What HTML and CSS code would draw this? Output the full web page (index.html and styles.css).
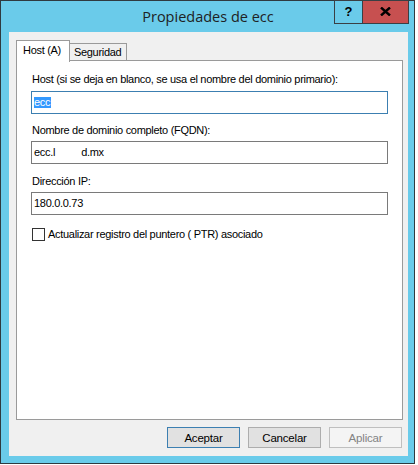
FILE: index.html
```html
<!DOCTYPE html>
<html lang="es">
<head>
<meta charset="utf-8">
<title>Propiedades de ecc</title>
<link rel="stylesheet" href="styles.css">
</head>
<body>
<div class="window">
  <div class="titlebar">
    <div class="title">Propiedades de ecc</div>
    <div class="controls">
      <div class="ctl help">?</div>
      <div class="ctl close">
        <svg width="11" height="9" viewBox="0 0 11 9"><path d="M1 0.5 L10 8.5 M10 0.5 L1 8.5" stroke="#000" stroke-width="2.4" fill="none"/></svg>
      </div>
    </div>
  </div>
  <div class="client">
    <div class="tabs">
      <div class="tab active">Host (A)</div>
      <div class="tab">Seguridad</div>
    </div>
    <div class="panel">
      <div class="label l1">Host (si se deja en blanco, se usa el nombre del dominio primario):</div>
      <div class="input focus i1"><span class="sel">ecc</span></div>
      <div class="label l2">Nombre de dominio completo (FQDN):</div>
      <div class="input i2">ecc.l<span class="redact"></span>d.mx</div>
      <div class="label l3">Dirección IP:</div>
      <div class="input i3">180.0.0.73</div>
      <div class="check">
        <span class="box"></span>
        <span class="checklabel">Actualizar registro del puntero ( PTR) asociado</span>
      </div>
    </div>
    <div class="buttons">
      <div class="btn default">Aceptar</div>
      <div class="btn">Cancelar</div>
      <div class="btn disabled">Aplicar</div>
    </div>
  </div>
</div>
</body>
</html>
```

FILE: styles.css
```css
html, body {
  margin: 0;
  padding: 0;
  background: #ffffff;
}

body {
  font-family: "Liberation Sans", Arial, sans-serif;
  font-size: 11px;
  letter-spacing: -0.3px;
  color: #000;
}

.window {
  width: 415px;
  height: 464px;
  box-sizing: border-box;
  border: 1px solid #2f3a40;
  background: #6acbea;
  display: flex;
  flex-direction: column;
}

.titlebar {
  position: relative;
  height: 31px;
  flex: none;
}

.title {
  text-align: center;
  font-family: "Open Sans", "Noto Sans", sans-serif;
  font-size: 14.5px;
  letter-spacing: 0;
  line-height: 31px;
  color: #1e2224;
  padding-left: 1px;
}

.controls {
  position: absolute;
  top: -1px;
  right: 5px;
  display: flex;
}

.ctl {
  height: 22px;
  box-sizing: content-box;
  border: 1px solid #3a3f44;
  display: flex;
  align-items: center;
  justify-content: center;
  letter-spacing: 0;
}

.help {
  width: 27px;
  border-right: none;
  font-weight: bold;
  font-size: 13px;
  font-family: "Liberation Sans", Arial, sans-serif;
  padding-bottom: 2px;
  height: 20px;
}

.close {
  width: 45px;
  background: #c75050;
}

.close svg {
  display: block;
  margin-top: -1px;
}

.client {
  flex: 1;
  margin: 0 6px 7px 8px;
  background: #f0f0f0;
  padding: 8px 5px 0 7px;
  display: flex;
  flex-direction: column;
}

.tabs {
  display: flex;
  align-items: flex-end;
  height: 20px;
}

.tab {
  box-sizing: border-box;
  height: 17px;
  border-top: 1px solid #9a9a9a;
  border-right: 1px solid #9a9a9a;
  padding: 2px 5px 0 4px;
  line-height: 13px;
  background: #f0f0f0;
}

.tab.active {
  position: relative;
  z-index: 1;
  height: 22px;
  margin-bottom: -2px;
  border-left: 1px solid #9a9a9a;
  background: #fff;
  padding: 3px 8px 0 6px;
}

.panel {
  height: 360px;
  box-sizing: border-box;
  border: 1px solid #9a9a9a;
  background: #fff;
  padding: 0 14px 0 14px;
}

.label {
  line-height: 13px;
  padding-left: 1px;
  white-space: nowrap;
}

.l1 { margin-top: 12px; }
.l2 { margin-top: 10px; }
.l3 { margin-top: 11px; }

.input {
  box-sizing: border-box;
  height: 23px;
  border: 1px solid #7a7a7a;
  background: #fff;
  padding: 0 2px;
  line-height: 21px;
  white-space: nowrap;
  display: flex;
  align-items: center;
}

.input.focus {
  border-color: #3c7fb1;
}

.i1 { margin-top: 5px; }
.i2 { margin-top: 4px; }
.i3 { margin-top: 4px; }

.sel {
  background: #3399ff;
  color: #fff;
  line-height: 11px;
  padding: 0 1px 0 0;
}

.redact {
  display: inline-block;
  width: 26px;
}

.check {
  margin-top: 13px;
  display: flex;
  align-items: center;
  padding-left: 1px;
}

.box {
  width: 11px;
  height: 11px;
  border: 1px solid #333;
  background: #fff;
  flex: none;
}

.checklabel {
  margin-left: 3px;
  line-height: 13px;
}

.buttons {
  display: flex;
  justify-content: flex-end;
  gap: 8px;
  margin-top: 7px;
  padding-right: 1px;
}

.btn {
  box-sizing: border-box;
  width: 73px;
  height: 21px;
  border: 1px solid #adadad;
  background: #e1e1e1;
  display: flex;
  align-items: center;
  justify-content: center;
  font-size: 11.5px;
  letter-spacing: -0.2px;
}

.btn.default {
  border-color: #3c7fb1;
}

.btn.disabled {
  background: #f4f4f4;
  border-color: #bfbfbf;
  color: #838383;
}
```
